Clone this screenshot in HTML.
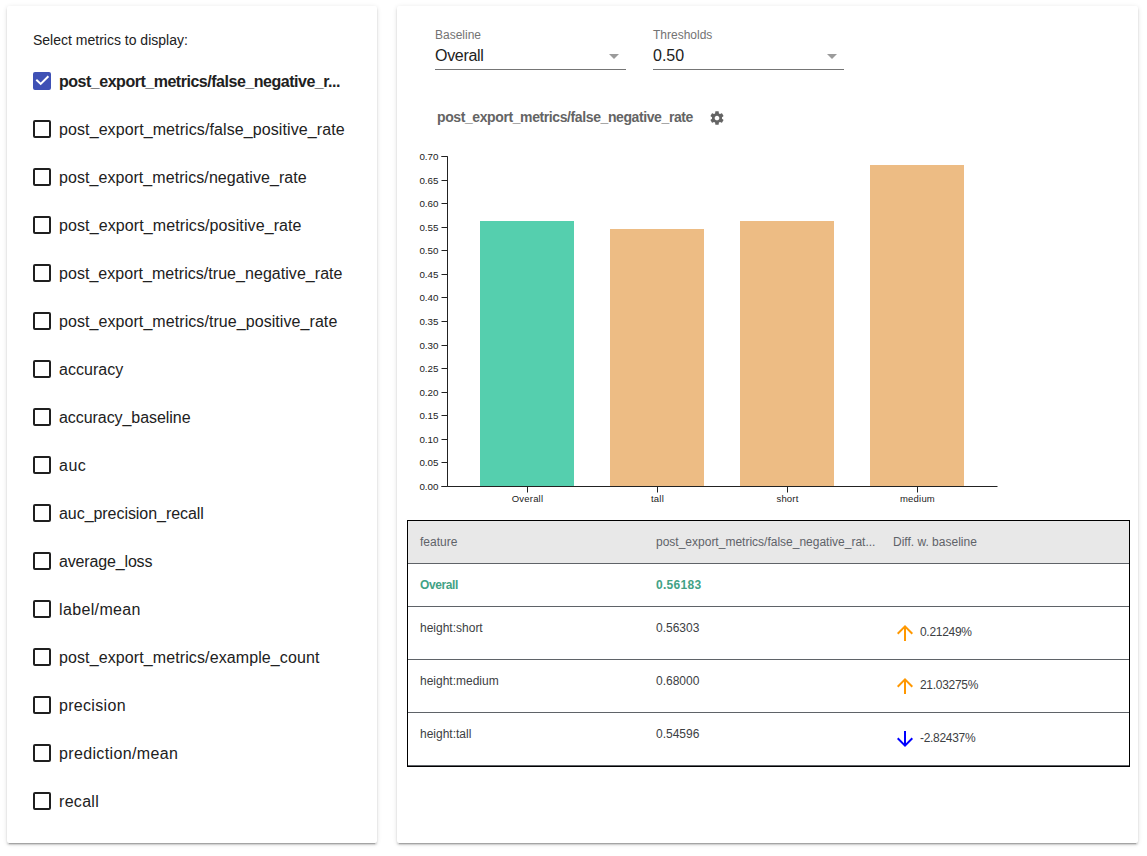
<!DOCTYPE html>
<html><head><meta charset="utf-8">
<style>
*{box-sizing:border-box}
html,body{margin:0;padding:0;background:#fff;width:1147px;height:856px;overflow:hidden;font-family:"Liberation Sans",sans-serif}
.card{position:absolute;background:#fff;border-radius:2px;box-shadow:0 2px 2px 0 rgba(0,0,0,.14),0 1px 5px 0 rgba(0,0,0,.12),0 3px 1px -2px rgba(0,0,0,.2)}
#left{left:7px;top:6px;width:370px;height:837px}
#right{left:397px;top:6px;width:741px;height:837px}
.abs{position:absolute;white-space:nowrap}
.sel{left:26px;top:26px;font-size:14px;color:#212121;line-height:16px}
.item{position:absolute;left:26px;height:18px;width:330px}
.cb{position:absolute;left:0;top:0;width:18px;height:18px;border:2px solid #1f1f1f;border-radius:2px}
.cb.on{background:#3f51b5;border-color:#3f51b5}
.lbl{position:absolute;left:26px;top:1px;font-size:16px;line-height:18px;color:#212121;white-space:nowrap}
.lbl.b{font-weight:bold;letter-spacing:-0.48px}
.dd-l{font-size:12px;color:#737373;line-height:14px}
.dd-v{font-size:16px;color:#212121;line-height:18px}
.dd-u{position:absolute;height:1px;background:#757575}
.tri{position:absolute;width:0;height:0;border-left:5px solid transparent;border-right:5px solid transparent;border-top:5px solid #9b9b9b}
.title{font-size:14px;font-weight:bold;color:#646464;letter-spacing:-0.4px;line-height:16px}
#tbl{position:absolute;width:723px;height:247px;border:1px solid #000}
.hdr{position:absolute;left:0;top:0;width:721px;height:42px;background:#e8e8e8}
.hl{position:absolute;left:0;width:721px;height:1px;background:#5f6368}
.cell{position:absolute;font-size:12px;color:#3c4043;white-space:nowrap;line-height:14px}
.cell.hd{color:#5f6368}
.cell.bl{color:#42a285;font-weight:bold}
.arr{display:block}

</style></head>
<body>
<div id="left" class="card">
<div class="abs sel">Select metrics to display:</div>
<div class="item" style="top:66px"><div class="cb on"><svg width="18" height="18" viewBox="0 0 18 18" style="position:absolute;left:-2px;top:-2px"><path d="M3.3 7.7 L7.7 11.9 L15.4 4.2" stroke="#fff" stroke-width="2" fill="none" stroke-linejoin="miter"/></svg></div><div class="lbl b">post_export_metrics/false_negative_r...</div></div>
<div class="item" style="top:114px"><div class="cb"></div><div class="lbl" style="letter-spacing:0.097px">post_export_metrics/false_positive_rate</div></div>
<div class="item" style="top:162px"><div class="cb"></div><div class="lbl" style="letter-spacing:0.069px">post_export_metrics/negative_rate</div></div>
<div class="item" style="top:210px"><div class="cb"></div><div class="lbl" style="letter-spacing:0.103px">post_export_metrics/positive_rate</div></div>
<div class="item" style="top:258px"><div class="cb"></div><div class="lbl" style="letter-spacing:0.041px">post_export_metrics/true_negative_rate</div></div>
<div class="item" style="top:306px"><div class="cb"></div><div class="lbl" style="letter-spacing:0.070px">post_export_metrics/true_positive_rate</div></div>
<div class="item" style="top:354px"><div class="cb"></div><div class="lbl" style="letter-spacing:0.043px">accuracy</div></div>
<div class="item" style="top:402px"><div class="cb"></div><div class="lbl" style="letter-spacing:-0.062px">accuracy_baseline</div></div>
<div class="item" style="top:450px"><div class="cb"></div><div class="lbl" style="letter-spacing:0.500px">auc</div></div>
<div class="item" style="top:498px"><div class="cb"></div><div class="lbl" style="letter-spacing:-0.053px">auc_precision_recall</div></div>
<div class="item" style="top:546px"><div class="cb"></div><div class="lbl" style="letter-spacing:-0.155px">average_loss</div></div>
<div class="item" style="top:594px"><div class="cb"></div><div class="lbl" style="letter-spacing:0.356px">label/mean</div></div>
<div class="item" style="top:642px"><div class="cb"></div><div class="lbl" style="letter-spacing:0.106px">post_export_metrics/example_count</div></div>
<div class="item" style="top:690px"><div class="cb"></div><div class="lbl" style="letter-spacing:0.312px">precision</div></div>
<div class="item" style="top:738px"><div class="cb"></div><div class="lbl" style="letter-spacing:0.357px">prediction/mean</div></div>
<div class="item" style="top:786px"><div class="cb"></div><div class="lbl" style="letter-spacing:0.300px">recall</div></div>
</div>
<div id="right" class="card">
<div class="abs dd-l" style="left:38px;top:22px">Baseline</div>
<div class="abs dd-v" style="left:38px;top:41px;letter-spacing:-0.3px">Overall</div>
<div class="dd-u" style="left:38px;top:63px;width:191px"></div>
<div class="tri" style="left:212px;top:48px"></div>
<div class="abs dd-l" style="left:256px;top:22px">Thresholds</div>
<div class="abs dd-v" style="left:256px;top:41px">0.50</div>
<div class="dd-u" style="left:256px;top:63px;width:191px"></div>
<div class="tri" style="left:430px;top:48px"></div>
<div class="abs title" style="left:40px;top:103px">post_export_metrics/false_negative_rate</div>
<svg class="abs" style="left:312px;top:104px" width="16" height="16" viewBox="0 0 24 24"><path fill="#646464" d="M19.43 12.98c.04-.32.07-.64.07-.98s-.03-.66-.07-.98l2.11-1.65c.19-.15.24-.42.12-.64l-2-3.46c-.12-.22-.39-.3-.61-.22l-2.49 1c-.52-.4-1.08-.73-1.69-.98l-.38-2.65C14.46 2.18 14.25 2 14 2h-4c-.25 0-.46.18-.49.42l-.38 2.65c-.61.25-1.17.59-1.69.98l-2.49-1c-.23-.09-.49 0-.61.22l-2 3.46c-.13.22-.07.49.12.64l2.11 1.65c-.04.32-.07.65-.07.98s.03.66.07.98l-2.11 1.65c-.19.15-.24.42-.12.64l2 3.46c.12.22.39.3.61.22l2.49-1c.52.4 1.08.73 1.69.98l.38 2.65c.03.24.24.42.49.42h4c.25 0 .46-.18.49-.42l.38-2.65c.61-.25 1.17-.59 1.69-.98l2.49 1c.23.09.49 0 .61-.22l2-3.46c.12-.22.07-.49-.12-.64l-2.11-1.65zM12 15.5c-1.93 0-3.5-1.57-3.5-3.5s1.57-3.5 3.5-3.5 3.5 1.57 3.5 3.5-1.57 3.5-3.5 3.5z"/></svg>
<svg class="abs" style="left:0;top:0" width="741" height="837">
<g font-family="Liberation Sans" font-size="9.8" fill="#222">
<line x1="44.5" x2="50.5" y1="480.50" y2="480.50" stroke="#222" stroke-width="1"/>
<text x="41.5" y="480.50" text-anchor="end" dy="0.32em">0.00</text>
<line x1="44.5" x2="50.5" y1="456.50" y2="456.50" stroke="#222" stroke-width="1"/>
<text x="41.5" y="456.50" text-anchor="end" dy="0.32em">0.05</text>
<line x1="44.5" x2="50.5" y1="433.50" y2="433.50" stroke="#222" stroke-width="1"/>
<text x="41.5" y="433.50" text-anchor="end" dy="0.32em">0.10</text>
<line x1="44.5" x2="50.5" y1="409.50" y2="409.50" stroke="#222" stroke-width="1"/>
<text x="41.5" y="409.50" text-anchor="end" dy="0.32em">0.15</text>
<line x1="44.5" x2="50.5" y1="386.50" y2="386.50" stroke="#222" stroke-width="1"/>
<text x="41.5" y="386.50" text-anchor="end" dy="0.32em">0.20</text>
<line x1="44.5" x2="50.5" y1="362.50" y2="362.50" stroke="#222" stroke-width="1"/>
<text x="41.5" y="362.50" text-anchor="end" dy="0.32em">0.25</text>
<line x1="44.5" x2="50.5" y1="339.50" y2="339.50" stroke="#222" stroke-width="1"/>
<text x="41.5" y="339.50" text-anchor="end" dy="0.32em">0.30</text>
<line x1="44.5" x2="50.5" y1="315.50" y2="315.50" stroke="#222" stroke-width="1"/>
<text x="41.5" y="315.50" text-anchor="end" dy="0.32em">0.35</text>
<line x1="44.5" x2="50.5" y1="291.50" y2="291.50" stroke="#222" stroke-width="1"/>
<text x="41.5" y="291.50" text-anchor="end" dy="0.32em">0.40</text>
<line x1="44.5" x2="50.5" y1="268.50" y2="268.50" stroke="#222" stroke-width="1"/>
<text x="41.5" y="268.50" text-anchor="end" dy="0.32em">0.45</text>
<line x1="44.5" x2="50.5" y1="244.50" y2="244.50" stroke="#222" stroke-width="1"/>
<text x="41.5" y="244.50" text-anchor="end" dy="0.32em">0.50</text>
<line x1="44.5" x2="50.5" y1="221.50" y2="221.50" stroke="#222" stroke-width="1"/>
<text x="41.5" y="221.50" text-anchor="end" dy="0.32em">0.55</text>
<line x1="44.5" x2="50.5" y1="197.50" y2="197.50" stroke="#222" stroke-width="1"/>
<text x="41.5" y="197.50" text-anchor="end" dy="0.32em">0.60</text>
<line x1="44.5" x2="50.5" y1="174.50" y2="174.50" stroke="#222" stroke-width="1"/>
<text x="41.5" y="174.50" text-anchor="end" dy="0.32em">0.65</text>
<line x1="44.5" x2="50.5" y1="150.50" y2="150.50" stroke="#222" stroke-width="1"/>
<text x="41.5" y="150.50" text-anchor="end" dy="0.32em">0.70</text>
</g>
<path d="M44.5 150.5H50.5V480.5H44.5" stroke="#222" fill="none" stroke-width="1"/>
<rect x="83" y="215.00" width="94" height="265.00" fill="#55cfae"/>
<rect x="213" y="223.00" width="94" height="257.00" fill="#edbc84"/>
<rect x="343" y="215.00" width="94" height="265.00" fill="#edbc84"/>
<rect x="473" y="159.00" width="94" height="321.00" fill="#edbc84"/>
<path d="M50.5 480.5H600.5" stroke="#222" fill="none" stroke-width="1"/>
<g font-family="Liberation Sans" font-size="9.5" letter-spacing="0.2" fill="#222">
<line x1="130.5" x2="130.5" y1="480.5" y2="486.5" stroke="#222"/>
<text x="130.5" y="489.5" text-anchor="middle" dy="0.71em">Overall</text>
<line x1="260.5" x2="260.5" y1="480.5" y2="486.5" stroke="#222"/>
<text x="260.5" y="489.5" text-anchor="middle" dy="0.71em">tall</text>
<line x1="390.5" x2="390.5" y1="480.5" y2="486.5" stroke="#222"/>
<text x="390.5" y="489.5" text-anchor="middle" dy="0.71em">short</text>
<line x1="520.5" x2="520.5" y1="480.5" y2="486.5" stroke="#222"/>
<text x="520.5" y="489.5" text-anchor="middle" dy="0.71em">medium</text>
</g></svg>
<div id="tbl" style="left:10px;top:514px">
<div class="hdr"></div>
<div class="cell hd" style="left:12px;top:14px">feature</div>
<div class="cell hd" style="left:248px;top:14px">post_export_metrics/false_negative_rat...</div>
<div class="cell hd" style="left:485px;top:14px">Diff. w. baseline</div>
<div class="hl" style="top:42px"></div>
<div class="cell bl" style="left:12px;top:57px;letter-spacing:-0.4px">Overall</div>
<div class="cell bl" style="left:248px;top:57px;letter-spacing:0.3px">0.56183</div>
<div class="hl" style="top:85px"></div>
<div class="cell" style="left:12px;top:100px">height:short</div>
<div class="cell" style="left:248px;top:100px">0.56303</div>
<div class="abs" style="left:485px;top:100px"><svg class="arr" width="24" height="24" viewBox="0 0 24 24"><path fill="#ff9800" d="M4 12l1.41 1.41L11 7.83V20h2V7.83l5.58 5.59L20 12l-8-8-8 8z"/></svg></div>
<div class="cell" style="left:512px;top:104px;letter-spacing:-0.3px">0.21249%</div>
<div class="hl" style="top:138px"></div>
<div class="cell" style="left:12px;top:153px">height:medium</div>
<div class="cell" style="left:248px;top:153px">0.68000</div>
<div class="abs" style="left:485px;top:153px"><svg class="arr" width="24" height="24" viewBox="0 0 24 24"><path fill="#ff9800" d="M4 12l1.41 1.41L11 7.83V20h2V7.83l5.58 5.59L20 12l-8-8-8 8z"/></svg></div>
<div class="cell" style="left:512px;top:157px;letter-spacing:-0.3px">21.03275%</div>
<div class="hl" style="top:191px"></div>
<div class="cell" style="left:12px;top:206px">height:tall</div>
<div class="cell" style="left:248px;top:206px">0.54596</div>
<div class="abs" style="left:485px;top:206px"><svg class="arr" width="24" height="24" viewBox="0 0 24 24"><path fill="#0000ff" d="M20 12l-1.41-1.41L13 16.17V4h-2v12.17l-5.58-5.59L4 12l8 8 8-8z"/></svg></div>
<div class="cell" style="left:512px;top:210px;letter-spacing:-0.3px">-2.82437%</div>
<div class="hl" style="top:244px"></div>
</div>
</div>
</body></html>
